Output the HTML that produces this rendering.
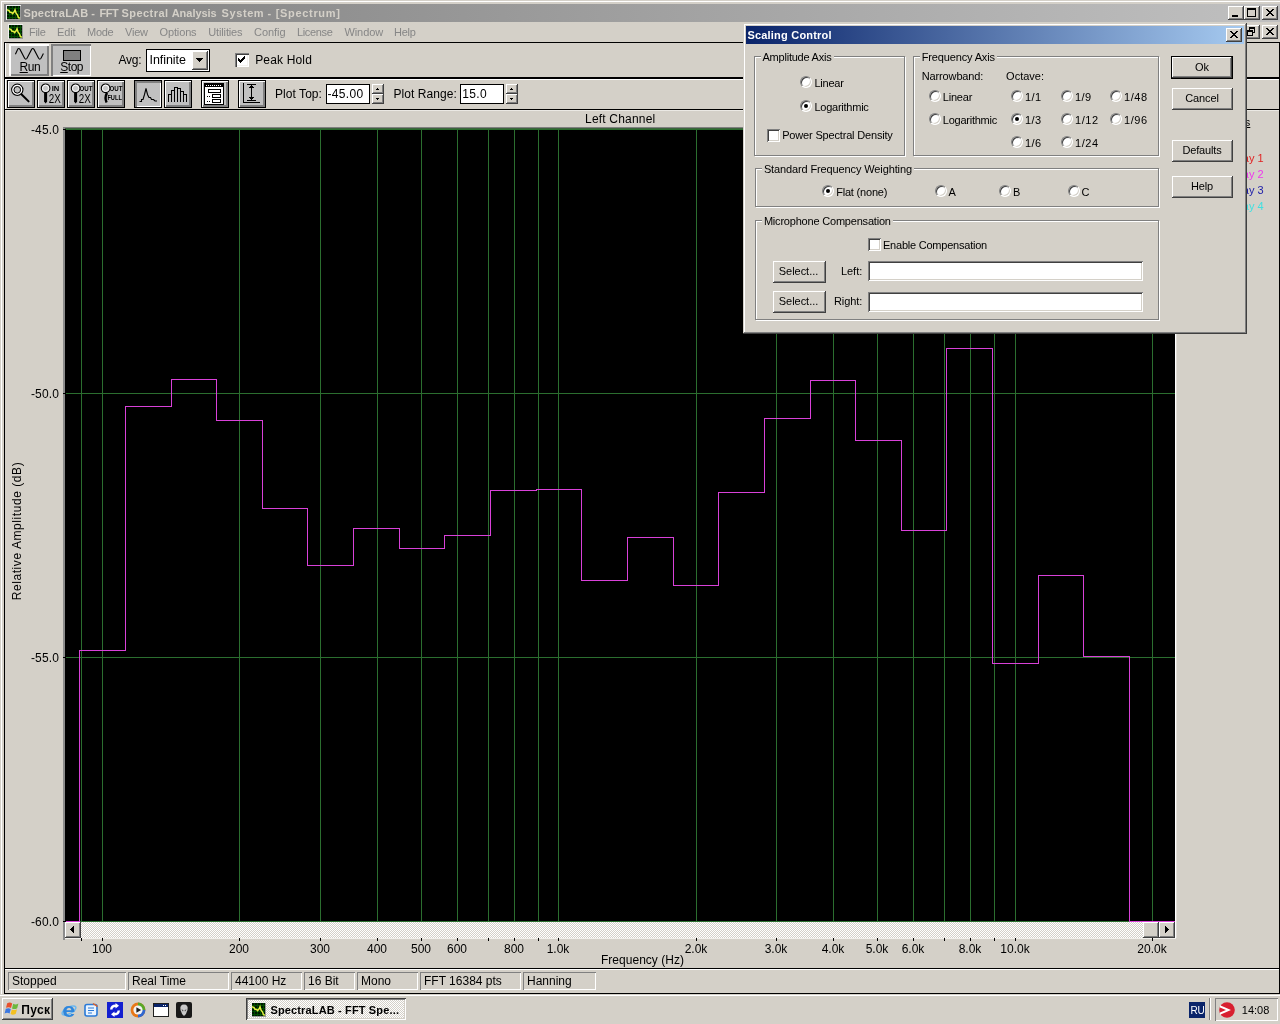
<!DOCTYPE html>
<html lang="en"><head><meta charset="utf-8"><title>SpectraLAB - FFT Spectral Analysis System - [Spectrum]</title>
<style>
html,body{margin:0;padding:0}
body{width:1280px;height:1024px;overflow:hidden;position:relative;background:#d4d0c8;
font-family:"Liberation Sans",sans-serif;font-size:12px;line-height:1;color:#000}
div,span,svg{position:absolute;box-sizing:border-box}
span{white-space:nowrap;line-height:1}
.k{background:#000}
.w{background:#fff}
.g{background:#2b6e2f}
.m{background:#d83fd8}
/* win classic raised button */
.rb{background:#d4d0c8;box-shadow:inset -1px -1px #404040,inset 1px 1px #fff,inset -2px -2px #808080,inset 2px 2px #d4d0c8}
/* caption button */
.cb{background:#d4d0c8;box-shadow:inset -1px -1px #404040,inset 1px 1px #fff,inset -2px -2px #808080}
/* sunken field */
.sf{background:#fff;box-shadow:inset 1px 1px #808080,inset -1px -1px #fff,inset 2px 2px #404040,inset -2px -2px #d4d0c8}
/* status pane */
.sp{box-shadow:inset 1px 1px #808080,inset -1px -1px #fff}
/* group box */
.gb{border:1px solid #808080;box-shadow:1px 1px #fff,inset 1px 1px #fff}
/* toolbar button (app custom) */
.tb{background:#c0c0c0;border:1px solid #000;box-shadow:inset 1px 1px #fff,inset -2px -2px #808080}
.tbp{background:#c0c0c0;border:1px solid #000;box-shadow:inset 2px 2px #808080,inset -1px -1px #fff}
/* radio */
.rd{width:12px;height:12px;border-radius:50%;background:#fff;border:1px solid;border-color:#808080 #fff #fff #808080;box-shadow:inset 1px 1px #404040,inset -1px -1px #d4d0c8}
.rd.on::after{content:"";position:absolute;left:3px;top:3px;width:4px;height:4px;border-radius:50%;background:#000}
.ck{width:13px;height:13px;background:#fff;box-shadow:inset 1px 1px #808080,inset -1px -1px #fff,inset 2px 2px #404040,inset -2px -2px #d4d0c8}
.dl{font-size:11px}
.root{left:0;top:0;width:1280px;height:1024px;will-change:transform}
</style></head>
<body>
<div class="root">
<div class="w" style="left:1px;top:1px;width:1279px;height:1px;"></div>
<div class="w" style="left:1px;top:1px;width:1px;height:994px;"></div>
<div style="left:4px;top:4px;width:1276px;height:18px;background:linear-gradient(90deg,#808080,#c0c0c0)"></div>
<svg style="left:6px;top:5px" width="16" height="16" viewBox="0 0 16 16" shape-rendering="crispEdges"><rect x="0" y="0" width="15" height="15" fill="#9a9a9a"/><rect x="0" y="0" width="15" height="1" fill="#f0f0f0"/><rect x="0" y="0" width="1" height="15" fill="#f0f0f0"/><rect x="1" y="1" width="13" height="13" fill="#001800"/><path d="M3.500 1v13M6.500 1v13M9.500 1v13M12.500 1v13M1 3.500h13M1 6.500h13M1 9.500h13M1 12.500h13" stroke="#004c00" stroke-width="1" fill="none"/><path d="M1 4.800L3 5.600L4 7.200L5.600 7.400L6.600 8.600L8 7L9 4.800L10 8L11.500 10L12.400 12.400L13.800 13.400" stroke="#e4f040" stroke-width="1.500" fill="none" shape-rendering="auto"/></svg>
<span style="left:23.4px;top:7.69px;font-size:11px;color:#d4d0c8;font-weight:bold;letter-spacing:0.203px;">SpectraLAB</span>
<span style="left:91.2px;top:7.69px;font-size:11px;color:#d4d0c8;font-weight:bold;">-</span>
<span style="left:99.4px;top:7.69px;font-size:11px;color:#d4d0c8;font-weight:bold;letter-spacing:-0.45px;">FFT</span>
<span style="left:121.5px;top:7.69px;font-size:11px;color:#d4d0c8;font-weight:bold;letter-spacing:0.447px;">Spectral</span>
<span style="left:171.7px;top:7.69px;font-size:11px;color:#d4d0c8;font-weight:bold;letter-spacing:-0.031px;">Analysis</span>
<span style="left:221.5px;top:7.69px;font-size:11px;color:#d4d0c8;font-weight:bold;letter-spacing:0.602px;">System</span>
<span style="left:267.5px;top:7.69px;font-size:11px;color:#d4d0c8;font-weight:bold;">-</span>
<span style="left:275.75px;top:7.69px;font-size:11px;color:#d4d0c8;font-weight:bold;letter-spacing:0.669px;">[Spectrum]</span>
<div class="cb" style="left:1228px;top:6px;width:16px;height:14px;"></div>
<div class="k" style="left:1232px;top:15px;width:6px;height:2px;"></div>
<div class="cb" style="left:1244px;top:6px;width:16px;height:14px;"></div>
<div style="left:1247px;top:8px;width:9px;height:9px;border:1px solid #000;border-top-width:2px"></div>
<div class="cb" style="left:1262px;top:6px;width:16px;height:14px;"></div>
<svg style="left:1266px;top:9px" width="8" height="7" viewBox="0 0 8 7" shape-rendering="crispEdges"><path d="M0 0h2v1h1v1h2v-1h1v-1h2v1h-1v1h-1v1h-1v1h1v1h1v1h1v1h-2v-1h-1v-1h-2v1h-1v1h-2v-1h1v-1h1v-1h1v-1h-1v-1h-1v-1h-1z" fill="#000"/></svg>
<svg style="left:8px;top:24px" width="16" height="16" viewBox="0 0 16 16" shape-rendering="crispEdges"><rect x="0" y="0" width="15" height="15" fill="#9a9a9a"/><rect x="0" y="0" width="15" height="1" fill="#f0f0f0"/><rect x="0" y="0" width="1" height="15" fill="#f0f0f0"/><rect x="1" y="1" width="13" height="13" fill="#001800"/><path d="M3.500 1v13M6.500 1v13M9.500 1v13M12.500 1v13M1 3.500h13M1 6.500h13M1 9.500h13M1 12.500h13" stroke="#004c00" stroke-width="1" fill="none"/><path d="M1 4.800L3 5.600L4 7.200L5.600 7.400L6.600 8.600L8 7L9 4.800L10 8L11.500 10L12.400 12.400L13.800 13.400" stroke="#e4f040" stroke-width="1.500" fill="none" shape-rendering="auto"/></svg>
<span style="left:29.1px;top:26.69px;font-size:11px;color:#868686;letter-spacing:-0.334px;">File</span>
<span style="left:57px;top:26.69px;font-size:11px;color:#868686;letter-spacing:-0.117px;">Edit</span>
<span style="left:87px;top:26.69px;font-size:11px;color:#868686;letter-spacing:-0.258px;">Mode</span>
<span style="left:125.1px;top:26.69px;font-size:11px;color:#868686;letter-spacing:-0.239px;">View</span>
<span style="left:159.5px;top:26.69px;font-size:11px;color:#868686;letter-spacing:-0.132px;">Options</span>
<span style="left:208.2px;top:26.69px;font-size:11px;color:#868686;letter-spacing:-0.128px;">Utilities</span>
<span style="left:254px;top:26.69px;font-size:11px;color:#868686;letter-spacing:-0.049px;">Config</span>
<span style="left:297px;top:26.69px;font-size:11px;color:#868686;letter-spacing:-0.346px;">License</span>
<span style="left:344.5px;top:26.69px;font-size:11px;color:#868686;letter-spacing:-0.104px;">Window</span>
<span style="left:394px;top:26.69px;font-size:11px;color:#868686;letter-spacing:-0.281px;">Help</span>
<div class="cb" style="left:1244px;top:25px;width:16px;height:14px;"></div>
<div style="left:1249px;top:27px;width:6px;height:6px;border:1px solid #000;border-top-width:2px"></div>
<div style="left:1247px;top:30px;width:6px;height:6px;border:1px solid #000;border-top-width:2px;background:#d4d0c8"></div>
<div class="cb" style="left:1262px;top:25px;width:16px;height:14px;"></div>
<svg style="left:1266px;top:28px" width="8" height="7" viewBox="0 0 8 7" shape-rendering="crispEdges"><path d="M0 0h2v1h1v1h2v-1h1v-1h2v1h-1v1h-1v1h-1v1h1v1h1v1h1v1h-2v-1h-1v-1h-2v1h-1v1h-2v-1h1v-1h1v-1h1v-1h-1v-1h-1v-1h-1z" fill="#000"/></svg>
<div class="k" style="left:4px;top:42px;width:1276px;height:1px;"></div>
<div class="k" style="left:4px;top:42px;width:1px;height:952px;"></div>
<div class="k" style="left:1279px;top:42px;width:1px;height:952px;"></div>
<div class="w" style="left:5px;top:43px;width:1px;height:34px;"></div>
<div class="w" style="left:5px;top:79px;width:1px;height:30px;"></div>
<div class="k" style="left:4px;top:77px;width:1276px;height:2px;"></div>
<div class="w" style="left:5px;top:79px;width:1274px;height:1px;"></div>
<div class="k" style="left:4px;top:109px;width:1276px;height:1px;"></div>
<div style="left:5px;top:110px;width:1274px;height:1px;background:#ebe9e4"></div>
<div class="k" style="left:4px;top:968px;width:1276px;height:1px;"></div>
<div class="w" style="left:5px;top:969px;width:1274px;height:1px;"></div>
<div class="k" style="left:4px;top:993px;width:1276px;height:1px;"></div>
<div style="left:9px;top:44px;width:40px;height:32px;background:#c0c0c0;box-shadow:inset 2px 2px #fff,inset -2px -2px #808080"></div>
<svg style="left:9px;top:44px" width="40" height="32" viewBox="9 44 40 32"><path d="M15.4 54.2 L17.6 49.4 Q18.8 47.6 20 49.4 L24.6 58.2 Q25.8 60 27 58.2 L31.6 49.4 Q32.8 47.6 34 49.4 L38.6 58.2 Q39.8 60 41 58.2 L43.4 53.6" stroke="#000" stroke-width="1.1" fill="none"/></svg>
<span style="left:19.6px;top:60.84px;font-size:12px;letter-spacing:-0.45px;"><u>R</u>un</span>
<div style="left:51px;top:44px;width:40px;height:32px;background:#c0c0c0;box-shadow:inset 2px 2px #808080,inset -1px -1px #fff"></div>
<div style="left:63px;top:50px;width:18px;height:11px;background:#808080;border:1px solid #000"></div>
<span style="left:60.2px;top:60.84px;font-size:12px;letter-spacing:-0.45px;"><u>S</u>top</span>
<span style="left:118.6px;top:53.84px;font-size:12px;letter-spacing:-0.299px;">Avg:</span>
<div style="left:146px;top:49px;width:64px;height:23px;background:#fff;border:1px solid #000"></div>
<span style="left:149.6px;top:54.42px;font-size:12.5px;letter-spacing:-0.08px;">Infinite</span>
<div class="rb" style="left:192px;top:51px;width:16px;height:19px;"></div>
<svg style="left:196px;top:58px" width="7" height="4" viewBox="0 0 7 4" shape-rendering="crispEdges"><path d="M0 0h7v1h-1v1h-1v1h-1v1h-1v-1h-1v-1h-1v-1h-1z" fill="#000"/></svg>
<div style="left:235px;top:53px;width:14px;height:14px;background:#fff;box-shadow:inset 1px 1px #808080,inset 2px 2px #404040,inset -1px -1px #fff,inset -2px -2px #f4f2ee"></div>
<svg style="left:238px;top:56px" width="7" height="7" viewBox="0 0 7 7" shape-rendering="crispEdges"><path d="M0 2h1v1h1v1h1v-1h1v-1h1v-1h1v-1h1v3h-1v1h-1v1h-1v1h-1v1h-1v-1h-1v-1h-1z" fill="#000"/></svg>
<span style="left:255.2px;top:53.84px;font-size:12px;letter-spacing:0.158px;">Peak Hold</span>
<div class="tb" style="left:7px;top:80px;width:28px;height:28px;"></div>
<svg style="left:7px;top:80px;font-family:'Liberation Sans',sans-serif" width="28" height="28" viewBox="0 0 28 28"><circle cx="10.3" cy="9.8" r="5.6" fill="none" stroke="#000" stroke-width="1.2"/><circle cx="10.3" cy="9.8" r="4.4" fill="none" stroke="#fff" stroke-width="1.2"/><circle cx="10.3" cy="9.8" r="3.3" fill="none" stroke="#000" stroke-width="1"/><path d="M14.4 14.2L21.6 21.4" stroke="#000" stroke-width="2" stroke-linecap="round"/></svg>
<div class="tb" style="left:37px;top:80px;width:28px;height:28px;"></div>
<svg style="left:37px;top:80px;font-family:'Liberation Sans',sans-serif" width="28" height="28" viewBox="0 0 28 28"><circle cx="8.6" cy="8.3" r="4.3" fill="#c8c8c8" stroke="#000" stroke-width="1.1"/><circle cx="8.6" cy="8.3" r="3.1" fill="none" stroke="#fff" stroke-width="1"/><path d="M7.1 13h3v8.5l-1.5 2 -1.5 -2z" fill="#000"/><text x="14.7" y="10.9" font-size="7" font-weight="bold" textLength="7.6" lengthAdjust="spacingAndGlyphs">IN</text><text x="11.8" y="22.700" font-size="12.400" textLength="12" lengthAdjust="spacingAndGlyphs">2X</text></svg>
<div class="tb" style="left:67px;top:80px;width:28px;height:28px;"></div>
<svg style="left:67px;top:80px;font-family:'Liberation Sans',sans-serif" width="28" height="28" viewBox="0 0 28 28"><text x="12.4" y="10.9" font-size="7" font-weight="bold" textLength="13" lengthAdjust="spacingAndGlyphs">OUT</text><circle cx="8.6" cy="8.3" r="4.3" fill="#c8c8c8" stroke="#000" stroke-width="1.1"/><circle cx="8.6" cy="8.3" r="3.1" fill="none" stroke="#fff" stroke-width="1"/><path d="M7.1 13h3v8.5l-1.5 2 -1.5 -2z" fill="#000"/><text x="11.8" y="22.700" font-size="12.400" textLength="12" lengthAdjust="spacingAndGlyphs">2X</text></svg>
<div class="tb" style="left:97px;top:80px;width:28px;height:28px;"></div>
<svg style="left:97px;top:80px;font-family:'Liberation Sans',sans-serif" width="28" height="28" viewBox="0 0 28 28"><text x="12.4" y="10.9" font-size="7" font-weight="bold" textLength="13" lengthAdjust="spacingAndGlyphs">OUT</text><circle cx="8.6" cy="8.3" r="4.3" fill="#c8c8c8" stroke="#000" stroke-width="1.1"/><circle cx="8.6" cy="8.3" r="3.1" fill="none" stroke="#fff" stroke-width="1"/><path d="M10 12.800Q7.400 17.500 9.600 22.500" stroke="#000" stroke-width="2.400" fill="none"/><text x="10.4" y="20" font-size="6.5" font-weight="bold" textLength="14.5" lengthAdjust="spacingAndGlyphs">FULL</text></svg>
<div class="tbp" style="left:134px;top:80px;width:28px;height:28px;"></div>
<svg style="left:134px;top:80px;font-family:'Liberation Sans',sans-serif" width="28" height="28" viewBox="0 0 28 28"><path d="M5.5 21.5h2v-2h1.5l1.5-5 1.5-6 1.5 6 1.5 3h1.5l1 2h2l1.5 1.5h2" stroke="#000" stroke-width="1.1" fill="none"/></svg>
<div class="tb" style="left:164px;top:80px;width:28px;height:28px;"></div>
<svg style="left:164px;top:80px;font-family:'Liberation Sans',sans-serif" width="28" height="28" viewBox="0 0 28 28"><path d="M4.500 22v-8h3v8M7.500 14v-4h3v12M10.500 10v-3h3v15M13.500 8.500h3v13.500M16.500 11.500h3v10.500M19.500 22v-8h3v8" stroke="#000" stroke-width="1" fill="none" shape-rendering="crispEdges"/></svg>
<div class="tb" style="left:201px;top:80px;width:28px;height:28px;"></div>
<svg style="left:200px;top:80px;font-family:'Liberation Sans',sans-serif" width="28" height="28" viewBox="0 0 28 28"><g shape-rendering="crispEdges"><rect x="4.500" y="3.500" width="19" height="21" fill="#fff" stroke="#000"/><rect x="5" y="4" width="18" height="3" fill="#000"/><path d="M6 5.500h16" stroke="#fff" stroke-dasharray="1 1"/><rect x="8.500" y="9.500" width="12" height="3" fill="#fff" stroke="#000"/><rect x="12.500" y="14.500" width="8" height="3" fill="#fff" stroke="#000"/><rect x="12.500" y="19.500" width="8" height="3" fill="#fff" stroke="#000"/><path d="M7 16.500h4M7 21.500h4" stroke="#000" stroke-dasharray="1 1"/></g></svg>
<div class="tb" style="left:238px;top:80px;width:28px;height:28px;"></div>
<svg style="left:238px;top:80px;font-family:'Liberation Sans',sans-serif" width="28" height="28" viewBox="0 0 28 28"><g shape-rendering="crispEdges"><path d="M5.500 3V22.500H22" stroke="#000" fill="none"/><path d="M9 4.500h9M9 20.500h9M13.500 5v15" stroke="#000" fill="none"/><path d="M11 8h5l-2.500 -3zM11 17h5l-2.500 3z" fill="#000"/></g></svg>
<span style="left:275px;top:88.44px;font-size:12px;letter-spacing:0.057px;">Plot Top:</span>
<div style="left:326px;top:84px;width:44px;height:20px;background:#fff;border:1px solid #000"></div>
<span style="left:327.4px;top:87.84px;font-size:12px;letter-spacing:0.328px;">-45.00</span>
<div class="cb" style="left:372px;top:84px;width:12px;height:10px;"></div>
<div class="cb" style="left:372px;top:94px;width:12px;height:10px;"></div>
<div class="k" style="left:377px;top:88px;width:1px;height:1px;"></div>
<div class="k" style="left:376px;top:89px;width:3px;height:1px;"></div>
<div class="k" style="left:376px;top:98px;width:3px;height:1px;"></div>
<div class="k" style="left:377px;top:99px;width:1px;height:1px;"></div>
<span style="left:393.4px;top:88.44px;font-size:12px;letter-spacing:0.08px;">Plot Range:</span>
<div style="left:460px;top:84px;width:44px;height:20px;background:#fff;border:1px solid #000"></div>
<span style="left:462.2px;top:87.84px;font-size:12px;letter-spacing:0.36px;">15.0</span>
<div class="cb" style="left:506px;top:84px;width:12px;height:10px;"></div>
<div class="cb" style="left:506px;top:94px;width:12px;height:10px;"></div>
<div class="k" style="left:511px;top:88px;width:1px;height:1px;"></div>
<div class="k" style="left:510px;top:89px;width:3px;height:1px;"></div>
<div class="k" style="left:510px;top:98px;width:3px;height:1px;"></div>
<div class="k" style="left:511px;top:99px;width:1px;height:1px;"></div>
<div style="left:63px;top:127px;width:2px;height:813px;background:#8c8c8c"></div>
<div style="left:63px;top:127px;width:1113px;height:1px;background:#808080"></div>
<div style="left:65px;top:128px;width:1110px;height:1px;background:#3c643c"></div>
<svg style="left:0;top:0" width="1280" height="1024" viewBox="0 0 1280 1024" shape-rendering="crispEdges"><rect x="65" y="129" width="1110" height="793" fill="#000"/><path d="M81.5 129V922 M102.5 129V922 M239.5 129V922 M320.5 129V922 M377.5 129V922 M421.5 129V922 M457.5 129V922 M488.5 129V922 M514.5 129V922 M538.5 129V922 M558.5 129V922 M696.5 129V922 M776.5 129V922 M833.5 129V922 M877.5 129V922 M913.5 129V922 M944.5 129V922 M970.5 129V922 M994.5 129V922 M1015.5 129V922 M1152.5 129V922 M65 129.5H1175 M65 393.5H1175 M65 657.5H1175 M65 921.5H1175" stroke="#2b6e2f" stroke-width="1" fill="none"/><path d="M65 921.5H79.5V650.5H125.5V406.5H171.5V379.5H216.5V420.5H262.5V508.5H307.5V565.5H353.5V528.5H399.5V548.5H444.5V535.5H490.5V490.5H536.5V489.5H581.5V580.5H627.5V537.5H673.5V585.5H718.5V492.5H764.5V418.5H810.5V380.5H855.5V440.5H901.5V530.5H946.5V348.5H992.5V663.5H1038.5V575.5H1083.5V656.5H1129.5V921.5H1175" stroke="#d941d9" stroke-width="1" fill="none"/></svg>
<div class="w" style="left:1175px;top:127px;width:1px;height:811px;"></div>
<div style="left:1176px;top:127px;width:1px;height:811px;background:#e2dfd9"></div>
<span style="left:585px;top:112.84px;font-size:12px;letter-spacing:0.203px;">Left Channel</span>
<span style="left:31px;top:123.84px;font-size:12px;letter-spacing:0.128px;">-45.0</span>
<div class="k" style="left:63px;top:129px;width:3px;height:1px;"></div>
<span style="left:31px;top:387.84px;font-size:12px;letter-spacing:0.128px;">-50.0</span>
<div class="k" style="left:63px;top:393px;width:3px;height:1px;"></div>
<span style="left:31px;top:651.84px;font-size:12px;letter-spacing:0.128px;">-55.0</span>
<div class="k" style="left:63px;top:657px;width:3px;height:1px;"></div>
<span style="left:31px;top:915.84px;font-size:12px;letter-spacing:0.128px;">-60.0</span>
<div class="k" style="left:63px;top:921px;width:3px;height:1px;"></div>
<span style="left:17px;top:531px;font-size:12px;letter-spacing:0.57px;transform:translate(-50%,-50%) rotate(-90deg);transform-origin:50% 50%">Relative Amplitude (dB)</span>
<span style="left:601px;top:954.24px;font-size:12px;letter-spacing:0.022px;">Frequency (Hz)</span>
<div style="left:65px;top:922px;width:1110px;height:16px;background:conic-gradient(#fff 25%,#d4d0c8 0 50%,#fff 0 75%,#d4d0c8 0) 0 0/2px 2px"></div>
<div class="rb" style="left:65px;top:922px;width:16px;height:16px;"></div>
<svg style="left:70px;top:926px" width="4" height="7" viewBox="0 0 4 7" shape-rendering="crispEdges"><path d="M3 0h1v7h-1v-1h-1v-1h-1v-1h-1v-1h1v-1h1v-1h1z" fill="#000"/></svg>
<div class="rb" style="left:1159px;top:922px;width:16px;height:16px;"></div>
<svg style="left:1165px;top:926px" width="4" height="7" viewBox="0 0 4 7" shape-rendering="crispEdges"><path d="M0 0h1v1h1v1h1v1h1v1h-1v1h-1v1h-1v1h-1z" fill="#000"/></svg>
<div class="rb" style="left:1143px;top:922px;width:16px;height:16px;"></div>
<div style="left:65px;top:938px;width:1111px;height:1px;background:#f2f0ec"></div>
<div class="k" style="left:102px;top:938px;width:1px;height:3px;"></div>
<span style="left:102px;top:942.84px;font-size:12px;transform:translateX(-50%)">100</span>
<div class="k" style="left:239px;top:938px;width:1px;height:3px;"></div>
<span style="left:239px;top:942.84px;font-size:12px;transform:translateX(-50%)">200</span>
<div class="k" style="left:320px;top:938px;width:1px;height:3px;"></div>
<span style="left:320px;top:942.84px;font-size:12px;transform:translateX(-50%)">300</span>
<div class="k" style="left:377px;top:938px;width:1px;height:3px;"></div>
<span style="left:377px;top:942.84px;font-size:12px;transform:translateX(-50%)">400</span>
<div class="k" style="left:421px;top:938px;width:1px;height:3px;"></div>
<span style="left:421px;top:942.84px;font-size:12px;transform:translateX(-50%)">500</span>
<div class="k" style="left:457px;top:938px;width:1px;height:3px;"></div>
<span style="left:457px;top:942.84px;font-size:12px;transform:translateX(-50%)">600</span>
<div class="k" style="left:488px;top:938px;width:1px;height:3px;"></div>
<div class="k" style="left:514px;top:938px;width:1px;height:3px;"></div>
<span style="left:514px;top:942.84px;font-size:12px;transform:translateX(-50%)">800</span>
<div class="k" style="left:538px;top:938px;width:1px;height:3px;"></div>
<div class="k" style="left:558px;top:938px;width:1px;height:3px;"></div>
<span style="left:558px;top:942.84px;font-size:12px;transform:translateX(-50%)">1.0k</span>
<div class="k" style="left:696px;top:938px;width:1px;height:3px;"></div>
<span style="left:696px;top:942.84px;font-size:12px;transform:translateX(-50%)">2.0k</span>
<div class="k" style="left:776px;top:938px;width:1px;height:3px;"></div>
<span style="left:776px;top:942.84px;font-size:12px;transform:translateX(-50%)">3.0k</span>
<div class="k" style="left:833px;top:938px;width:1px;height:3px;"></div>
<span style="left:833px;top:942.84px;font-size:12px;transform:translateX(-50%)">4.0k</span>
<div class="k" style="left:877px;top:938px;width:1px;height:3px;"></div>
<span style="left:877px;top:942.84px;font-size:12px;transform:translateX(-50%)">5.0k</span>
<div class="k" style="left:913px;top:938px;width:1px;height:3px;"></div>
<span style="left:913px;top:942.84px;font-size:12px;transform:translateX(-50%)">6.0k</span>
<div class="k" style="left:944px;top:938px;width:1px;height:3px;"></div>
<div class="k" style="left:970px;top:938px;width:1px;height:3px;"></div>
<span style="left:970px;top:942.84px;font-size:12px;transform:translateX(-50%)">8.0k</span>
<div class="k" style="left:994px;top:938px;width:1px;height:3px;"></div>
<div class="k" style="left:1015px;top:938px;width:1px;height:3px;"></div>
<span style="left:1015px;top:942.84px;font-size:12px;transform:translateX(-50%)">10.0k</span>
<div class="k" style="left:1152px;top:938px;width:1px;height:3px;"></div>
<span style="left:1152px;top:942.84px;font-size:12px;transform:translateX(-50%)">20.0k</span>
<div class="k" style="left:81px;top:938px;width:1px;height:3px;"></div>
<span style="left:1206.9px;top:116.99px;font-size:11px;"><u>Overlays</u></span>
<span style="left:1216.6px;top:152.69px;font-size:11px;color:#e02424;">Overlay 1</span>
<span style="left:1216.6px;top:168.69px;font-size:11px;color:#ee38ee;">Overlay 2</span>
<span style="left:1216.6px;top:184.69px;font-size:11px;color:#1c1ca8;">Overlay 3</span>
<span style="left:1216.6px;top:200.69px;font-size:11px;color:#40e0e0;">Overlay 4</span>
<div class="sp" style="left:8px;top:972px;width:118px;height:18px;"></div>
<span style="left:12px;top:974.84px;font-size:12px;">Stopped</span>
<div class="sp" style="left:128px;top:972px;width:101px;height:18px;"></div>
<span style="left:132px;top:974.84px;font-size:12px;">Real Time</span>
<div class="sp" style="left:231px;top:972px;width:71px;height:18px;"></div>
<span style="left:235px;top:974.84px;font-size:12px;">44100 Hz</span>
<div class="sp" style="left:304px;top:972px;width:51px;height:18px;"></div>
<span style="left:308px;top:974.84px;font-size:12px;">16 Bit</span>
<div class="sp" style="left:357px;top:972px;width:61px;height:18px;"></div>
<span style="left:361px;top:974.84px;font-size:12px;">Mono</span>
<div class="sp" style="left:420px;top:972px;width:101px;height:18px;"></div>
<span style="left:424px;top:974.84px;font-size:12px;">FFT 16384 pts</span>
<div class="sp" style="left:523px;top:972px;width:73px;height:18px;"></div>
<span style="left:527px;top:974.84px;font-size:12px;">Hanning</span>
<div style="left:743px;top:23px;width:504px;height:311px;background:#d4d0c8;box-shadow:inset -1px -1px #404040,inset 1px 1px #d4d0c8,inset -2px -2px #808080,inset 2px 2px #fff"></div>
<div style="left:746px;top:26px;width:498px;height:18px;background:linear-gradient(90deg,#0a246a,#a6caf0)"></div>
<span style="left:747.4px;top:29.69px;font-size:11px;color:#fff;font-weight:bold;letter-spacing:0.208px;">Scaling Control</span>
<div class="cb" style="left:1226px;top:28px;width:16px;height:14px;"></div>
<svg style="left:1230px;top:31px" width="8" height="7" viewBox="0 0 8 7" shape-rendering="crispEdges"><path d="M0 0h2v1h1v1h2v-1h1v-1h2v1h-1v1h-1v1h-1v1h1v1h1v1h1v1h-2v-1h-1v-1h-2v1h-1v1h-2v-1h1v-1h1v-1h1v-1h-1v-1h-1v-1h-1z" fill="#000"/></svg>
<div class="gb" style="left:754px;top:56px;width:151px;height:100px;"></div>
<div style="left:760.9px;top:50px;width:73px;height:13px;background:#d4d0c8"></div>
<span style="left:762.5px;top:51.69px;font-size:11px;letter-spacing:-0.225px;">Amplitude Axis</span>
<div class="rd" style="left:800px;top:76px"></div>
<span style="left:814.4px;top:77.59px;font-size:11px;letter-spacing:-0.213px;">Linear</span>
<div class="rd on" style="left:800px;top:100px"></div>
<span style="left:814.4px;top:101.59px;font-size:11px;letter-spacing:-0.242px;">Logarithmic</span>
<div class="ck" style="left:767px;top:129px"></div>
<span style="left:782.2px;top:130.09px;font-size:11px;letter-spacing:-0.174px;">Power Spectral Density</span>
<div class="gb" style="left:913px;top:56px;width:246px;height:100px;"></div>
<div style="left:920.1px;top:50px;width:77.2px;height:13px;background:#d4d0c8"></div>
<span style="left:921.7px;top:51.69px;font-size:11px;letter-spacing:-0.143px;">Frequency Axis</span>
<span style="left:921.7px;top:70.79px;font-size:11px;letter-spacing:-0.126px;">Narrowband:</span>
<span style="left:1006.1px;top:70.79px;font-size:11px;letter-spacing:-0.001px;">Octave:</span>
<div class="rd" style="left:929px;top:90px"></div>
<span style="left:942.8px;top:91.59px;font-size:11px;letter-spacing:-0.213px;">Linear</span>
<div class="rd" style="left:929px;top:113px"></div>
<span style="left:942.8px;top:114.59px;font-size:11px;letter-spacing:-0.242px;">Logarithmic</span>
<div class="rd" style="left:1011px;top:90px"></div>
<span style="left:1025.1px;top:91.59px;font-size:11px;letter-spacing:0.368px;">1/1</span>
<div class="rd" style="left:1061px;top:90px"></div>
<span style="left:1075.1px;top:91.59px;font-size:11px;letter-spacing:0.368px;">1/9</span>
<div class="rd" style="left:1110px;top:90px"></div>
<span style="left:1124.1px;top:91.59px;font-size:11px;letter-spacing:0.545px;">1/48</span>
<div class="rd on" style="left:1011px;top:113px"></div>
<span style="left:1025.1px;top:114.59px;font-size:11px;letter-spacing:0.368px;">1/3</span>
<div class="rd" style="left:1061px;top:113px"></div>
<span style="left:1075.1px;top:114.59px;font-size:11px;letter-spacing:0.545px;">1/12</span>
<div class="rd" style="left:1110px;top:113px"></div>
<span style="left:1124.1px;top:114.59px;font-size:11px;letter-spacing:0.545px;">1/96</span>
<div class="rd" style="left:1011px;top:136px"></div>
<span style="left:1025.1px;top:137.59px;font-size:11px;letter-spacing:0.368px;">1/6</span>
<div class="rd" style="left:1061px;top:136px"></div>
<span style="left:1075.1px;top:137.59px;font-size:11px;letter-spacing:0.545px;">1/24</span>
<div class="gb" style="left:755px;top:168px;width:404px;height:39px;"></div>
<div style="left:762.3px;top:162px;width:152px;height:13px;background:#d4d0c8"></div>
<span style="left:763.9px;top:163.69px;font-size:11px;letter-spacing:-0.123px;">Standard Frequency Weighting</span>
<div class="rd on" style="left:822px;top:185px"></div>
<span style="left:836.2px;top:186.59px;font-size:11px;letter-spacing:-0.2px;">Flat (none)</span>
<div class="rd" style="left:935px;top:185px"></div>
<span style="left:948.5px;top:186.59px;font-size:11px;">A</span>
<div class="rd" style="left:999px;top:185px"></div>
<span style="left:1013.1px;top:186.59px;font-size:11px;">B</span>
<div class="rd" style="left:1068px;top:185px"></div>
<span style="left:1081.6px;top:186.59px;font-size:11px;">C</span>
<div class="gb" style="left:755px;top:220px;width:404px;height:100px;"></div>
<div style="left:762.3px;top:214px;width:130.9px;height:13px;background:#d4d0c8"></div>
<span style="left:763.9px;top:215.69px;font-size:11px;letter-spacing:-0.199px;">Microphone Compensation</span>
<div class="ck" style="left:868px;top:238px"></div>
<span style="left:883px;top:239.59px;font-size:11px;letter-spacing:-0.224px;">Enable Compensation</span>
<div class="rb" style="left:773px;top:261px;width:53px;height:22px;"></div>
<span style="left:778.8px;top:265.59px;font-size:11px;letter-spacing:-0.039px;">Select...</span>
<div class="rb" style="left:773px;top:291px;width:53px;height:22px;"></div>
<span style="left:778.8px;top:295.59px;font-size:11px;letter-spacing:-0.039px;">Select...</span>
<span style="left:840.9px;top:265.59px;font-size:11px;letter-spacing:-0.001px;">Left:</span>
<span style="left:833.9px;top:295.59px;font-size:11px;letter-spacing:-0.058px;">Right:</span>
<div class="sf" style="left:868px;top:261px;width:275px;height:20px;"></div>
<div class="sf" style="left:868px;top:292px;width:275px;height:20px;"></div>
<div class="k" style="left:1171px;top:56px;width:62px;height:23px;"></div>
<div class="rb" style="left:1172px;top:57px;width:60px;height:21px;"></div>
<span style="left:1202px;top:62.19px;font-size:11px;letter-spacing:-0.15px;transform:translateX(-50%)">Ok</span>
<div class="rb" style="left:1172px;top:88px;width:61px;height:22px;"></div>
<span style="left:1202px;top:93.19px;font-size:11px;letter-spacing:-0.15px;transform:translateX(-50%)">Cancel</span>
<div class="rb" style="left:1172px;top:140px;width:61px;height:22px;"></div>
<span style="left:1202px;top:145.19px;font-size:11px;letter-spacing:-0.15px;transform:translateX(-50%)">Defaults</span>
<div class="rb" style="left:1172px;top:176px;width:61px;height:22px;"></div>
<span style="left:1202px;top:181.19px;font-size:11px;letter-spacing:-0.15px;transform:translateX(-50%)">Help</span>
<div style="left:0px;top:994px;width:1280px;height:30px;background:#d4d0c8"></div>
<div class="w" style="left:0px;top:995px;width:1280px;height:1px;"></div>
<div class="rb" style="left:2px;top:998px;width:51px;height:22px;"></div>
<svg style="left:4px;top:1001px" width="17" height="16" viewBox="0 0 17 16"><path d="M3.2 2.2Q6 0.600 8.200 2.400L7 7Q4.800 5.400 2 6.800z" fill="#e8502c"/><path d="M9.200 2.800Q11.500 4.200 14.400 2.600L13.200 7.200Q10.400 8.800 8 7.400z" fill="#6cb83c"/><path d="M1.800 7.800Q4.600 6.400 6.800 8L5.600 12.600Q3.400 11 0.600 12.400z" fill="#3c78e0"/><path d="M7.800 8.400Q10.200 9.800 13 8.200L11.800 12.800Q9 14.400 6.600 13z" fill="#f4c020"/></svg>
<span style="left:21.2px;top:1004.14px;font-size:12px;color:#000;font-weight:bold;letter-spacing:0.378px;">Пуск</span>
<svg style="left:61px;top:1002px;font-family:'Liberation Sans',sans-serif" width="16" height="16" viewBox="0 0 16 16"><ellipse cx="8" cy="8.500" rx="7.600" ry="3.200" transform="rotate(-28 8 8.500)" fill="none" stroke="#6cb8f0" stroke-width="1.500"/><text x="1.200" y="14.600" font-size="21" font-weight="bold" fill="#2f86dc" textLength="13" lengthAdjust="spacingAndGlyphs">e</text></svg>
<svg style="left:83px;top:1002px;font-family:'Liberation Sans',sans-serif" width="16" height="16" viewBox="0 0 16 16"><rect x="2" y="2.500" width="12" height="11.500" rx="2" fill="#eaf4ff" stroke="#2a7ad8" stroke-width="1.600"/><path d="M5 6h6M5 8.500h6M5 11h4" stroke="#2a7ad8" stroke-width="1.200"/><path d="M10 1.500l4.500 3" stroke="#e86020" stroke-width="1.400"/></svg>
<svg style="left:107px;top:1002px;font-family:'Liberation Sans',sans-serif" width="16" height="16" viewBox="0 0 16 16"><rect x="0" y="0" width="16" height="16" fill="#1420d0"/><path d="M3 7.500Q3.500 2.500 8.500 2.500L8.500 1 12 3.800 8.500 6.500 8.500 5Q5.500 5 5.500 7.500z" fill="#fff"/><path d="M13 8.500Q12.500 13.500 7.500 13.500L7.500 15 4 12.200 7.500 9.500 7.500 11Q10.500 11 10.500 8.500z" fill="#fff"/></svg>
<svg style="left:130px;top:1002px;font-family:'Liberation Sans',sans-serif" width="16" height="16" viewBox="0 0 16 16"><circle cx="8" cy="8" r="7.400" fill="#e87818"/><path d="M8 8L8 0.600A7.400 7.400 0 0 1 15.400 8z" fill="#58a828"/><path d="M8 8L15.400 8A7.400 7.400 0 0 1 8 15.400z" fill="#3068d0"/><circle cx="8" cy="8" r="4.600" fill="#f4f4f4"/><path d="M6.400 5.200L11.200 8L6.400 10.800z" fill="#202020"/></svg>
<svg style="left:153px;top:1002px;font-family:'Liberation Sans',sans-serif" width="16" height="16" viewBox="0 0 16 16"><rect x="0.500" y="1.500" width="15" height="13" fill="#fff" stroke="#202020"/><rect x="1" y="2" width="14" height="3" fill="#0a246a"/><path d="M10 3.500h4" stroke="#fff" stroke-dasharray="1 1"/></svg>
<svg style="left:176px;top:1002px;font-family:'Liberation Sans',sans-serif" width="16" height="16" viewBox="0 0 16 16"><rect x="0" y="0" width="16" height="16" rx="2" fill="#181818"/><path d="M8 2.500Q12.500 2.500 11.500 8Q10.500 12 8 14Q5.500 12 4.500 8Q3.500 2.500 8 2.500z" fill="#c8c8c8"/><path d="M5.400 7l2 1.600 -0.400 1zM10.600 7l-2 1.600 0.400 1z" fill="#181818"/></svg>
<div style="left:246px;top:998px;width:160px;height:22px;background:conic-gradient(#fff 25%,#d4d0c8 0 50%,#fff 0 75%,#d4d0c8 0) 0 0/2px 2px;box-shadow:inset 1px 1px #404040,inset -1px -1px #fff,inset 2px 2px #808080,inset -2px -2px #d4d0c8"></div>
<svg style="left:251px;top:1002px" width="16" height="16" viewBox="0 0 16 16" shape-rendering="crispEdges"><rect x="0" y="0" width="15" height="15" fill="#9a9a9a"/><rect x="0" y="0" width="15" height="1" fill="#f0f0f0"/><rect x="0" y="0" width="1" height="15" fill="#f0f0f0"/><rect x="1" y="1" width="13" height="13" fill="#001800"/><path d="M3.500 1v13M6.500 1v13M9.500 1v13M12.500 1v13M1 3.500h13M1 6.500h13M1 9.500h13M1 12.500h13" stroke="#004c00" stroke-width="1" fill="none"/><path d="M1 4.800L3 5.600L4 7.200L5.600 7.400L6.600 8.600L8 7L9 4.800L10 8L11.500 10L12.400 12.400L13.800 13.400" stroke="#e4f040" stroke-width="1.500" fill="none" shape-rendering="auto"/></svg>
<span style="left:270.4px;top:1004.69px;font-size:11px;color:#000;font-weight:bold;letter-spacing:0.148px;">SpectraLAB - FFT Spe...</span>
<div style="left:1189px;top:1002px;width:16px;height:16px;background:#0a246a"></div>
<span style="left:1190.4px;top:1005.53px;font-size:10px;color:#fff;letter-spacing:-0.027px;">RU</span>
<div style="left:1209px;top:998px;width:1px;height:22px;background:#808080"></div>
<div class="w" style="left:1210px;top:998px;width:1px;height:22px;"></div>
<div class="sp" style="left:1215px;top:998px;width:63px;height:23px;"></div>
<svg style="left:1219px;top:1002px" width="16" height="16" viewBox="0 0 16 16"><circle cx="8" cy="8" r="7.800" fill="#d82030"/><path d="M1 3.200L12 8L1 12.800L1 10.400L7 8L1 5.600z" fill="#fff"/></svg>
<span style="left:1241.8px;top:1004.69px;font-size:11px;color:#000;letter-spacing:-0.006px;">14:08</span>
</div>
</body></html>
